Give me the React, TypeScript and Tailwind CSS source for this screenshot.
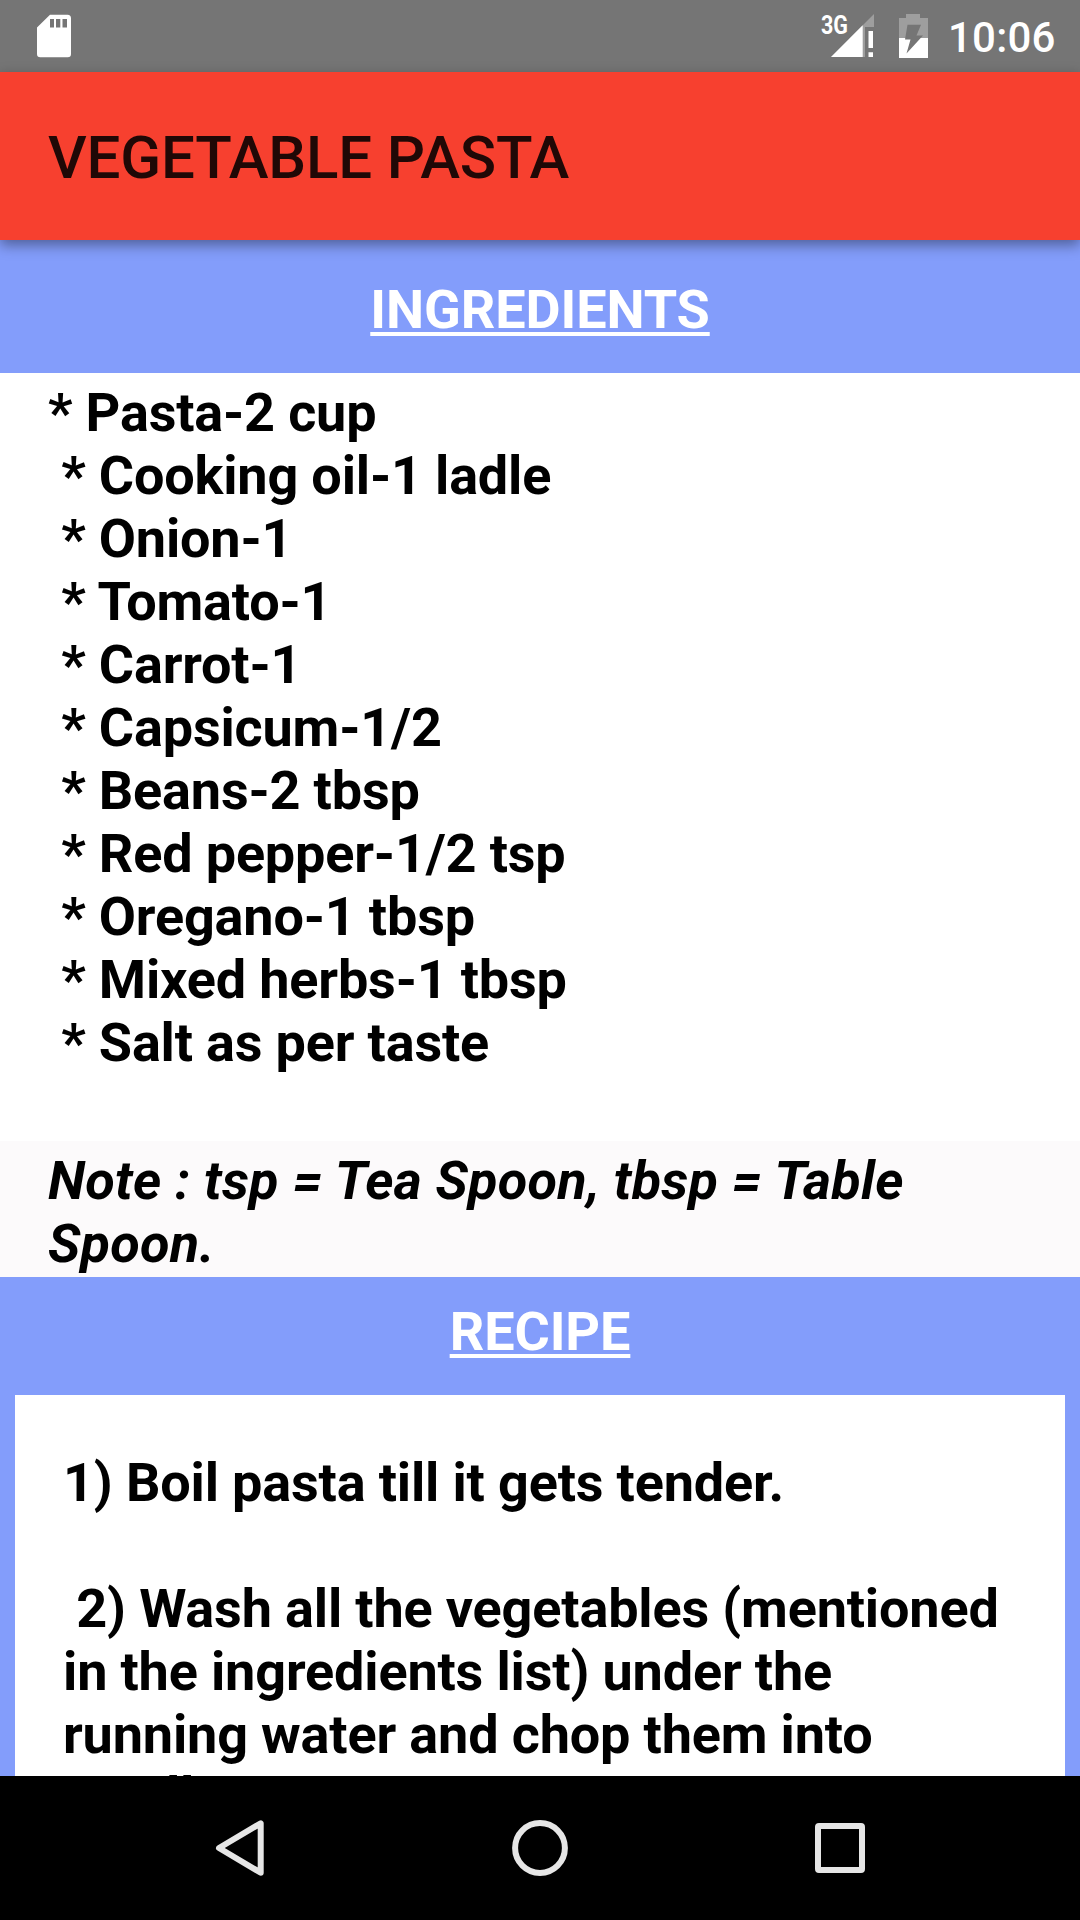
const ingredients = [
  '* Pasta-2 cup',
  ' * Cooking oil-1 ladle',
  ' * Onion-1',
  ' * Tomato-1',
  ' * Carrot-1',
  ' * Capsicum-1/2',
  ' * Beans-2 tbsp',
  ' * Red pepper-1/2 tsp',
  ' * Oregano-1 tbsp',
  ' * Mixed herbs-1 tbsp',
  ' * Salt as per taste'
]

const recipe = `1) Boil pasta till it gets tender.

 2) Wash all the vegetables (mentioned
in the ingredients list) under the
running water and chop them into`

function StatusBar() {
  return (
    <div className="h-[72px] shrink-0 flex items-start bg-[#757575] text-white">
      <svg className="w-[34px] h-[72px] ml-[37px]" viewBox="37 0 34 72">
        <path
          fill="#fff"
          fillRule="evenodd"
          d="M50 14.7H67.500Q71 14.700 71 18.200V54Q71 57.300 67.700 57.300H40.300Q37 57.300 37 54V27.500ZM50 19V27.500H54V19ZM56 19V27.500H60.300V19ZM62.500 19V27.500H67V19Z"
        />
      </svg>
      {/* Mobile signal */}
      <svg className="w-[55px] h-[72px] ml-auto" viewBox="820 0 55 72">
        <path fill="#fff" fillOpacity="0.3" d="M874 14V27H865V57H831Z" />
        <path fill="#fff" d="M831 57L862.700 25.300V57Z" />
        <path fill="#fff" d="M868.500 31H873V48H868.500ZM868.500 52.300H873V57H868.500Z" />
        <text
          x="821"
          y="33.500"
          fill="#fff"
          textLength="27"
          lengthAdjust="spacingAndGlyphs"
          className="font-['Roboto',sans-serif] text-[26px] font-bold"
        >
          3G
        </text>
      </svg>
      {/* Charging battery */}
      <svg className="w-[30px] h-[72px] ml-6" viewBox="899 0 30 72">
        <path fill="#fff" fillOpacity="0.3" d="M906 14H920V18H928V38H899V18H906Z" />
        <path fill="#fff" d="M899 38H928V58H899Z" />
        <path fill="#757575" d="M907.500 24.700H921L916.500 35.500H923L906.500 53.500L910.500 39.500H905Z" />
      </svg>
      <span className="w-[132px] shrink-0 ml-[19px] mt-[13px] text-[42px] leading-[49px] font-medium tracking-[0.2px]">
        10:06
      </span>
    </div>
  )
}

function SectionTitle({ children }: { children: string }) {
  return (
    <h2 className="text-center text-white underline decoration-[3.5px] underline-offset-[4px] [text-decoration-skip-ink:none] tracking-[-0.1px]">
      {children}
    </h2>
  )
}

function NavBar() {
  return (
    <div className="h-36 shrink-0 flex items-center bg-black pl-[210px]">
      <svg className="w-[60px] h-[60px]" viewBox="210 1818 60 60" fill="none" stroke="#e6e6e6" strokeWidth="6">
        <path strokeLinejoin="round" d="M260.700 1823.300V1872.700L219 1848Z" />
      </svg>
      <svg className="w-[60px] h-[60px] ml-[240px]" viewBox="510 1818 60 60" fill="none" stroke="#e6e6e6" strokeWidth="6">
        <circle cx="540" cy="1848" r="24.900" />
      </svg>
      <svg className="w-[60px] h-[60px] ml-[240px]" viewBox="810 1818 60 60" fill="none" stroke="#e6e6e6" strokeWidth="6">
        <rect x="818" y="1826" width="44" height="44" rx="1" strokeLinejoin="round" />
      </svg>
    </div>
  )
}

export default function App() {
  return (
    <div className="w-[1080px] h-[1920px] flex flex-col overflow-hidden bg-white font-['Roboto',sans-serif]">
      <StatusBar />

      <header className="relative z-10 h-[168px] shrink-0 flex items-center bg-[#f7402f] pt-1 pl-12 shadow-[0_5px_13px_rgba(0,0,0,0.4)]">
        <h1 className="text-[60px] leading-[70px] font-medium tracking-[-0.2px] text-black/87">VEGETABLE PASTA</h1>
      </header>

      <main className="flex-1 min-h-0 overflow-hidden text-[54px] leading-[63px] font-bold text-black">
        <div className="h-[133px] bg-[#839dfb] pt-[38px]">
          <SectionTitle>INGREDIENTS</SectionTitle>
        </div>

        <ul className="h-[768px] px-12 pt-2 tracking-[-0.18px]">
          {ingredients.map((item) => (
            <li key={item} className="whitespace-pre">{item}</li>
          ))}
        </ul>

        <p className="h-[136px] bg-[#fcfafb] px-12 pt-2 italic tracking-[0.26px]">
          Note : tsp = Tea Spoon, tbsp = Table Spoon.
        </p>

        <div className="bg-[#839dfb] px-[15px] pt-[23px]">
          <SectionTitle>RECIPE</SectionTitle>
          <div className="mt-8 bg-white px-12 pt-14 tracking-[-0.16px]">
            <p className="whitespace-pre">{recipe}</p>
            <p className="leading-[61px]">small</p>
          </div>
        </div>
      </main>

      <NavBar />
    </div>
  )
}
